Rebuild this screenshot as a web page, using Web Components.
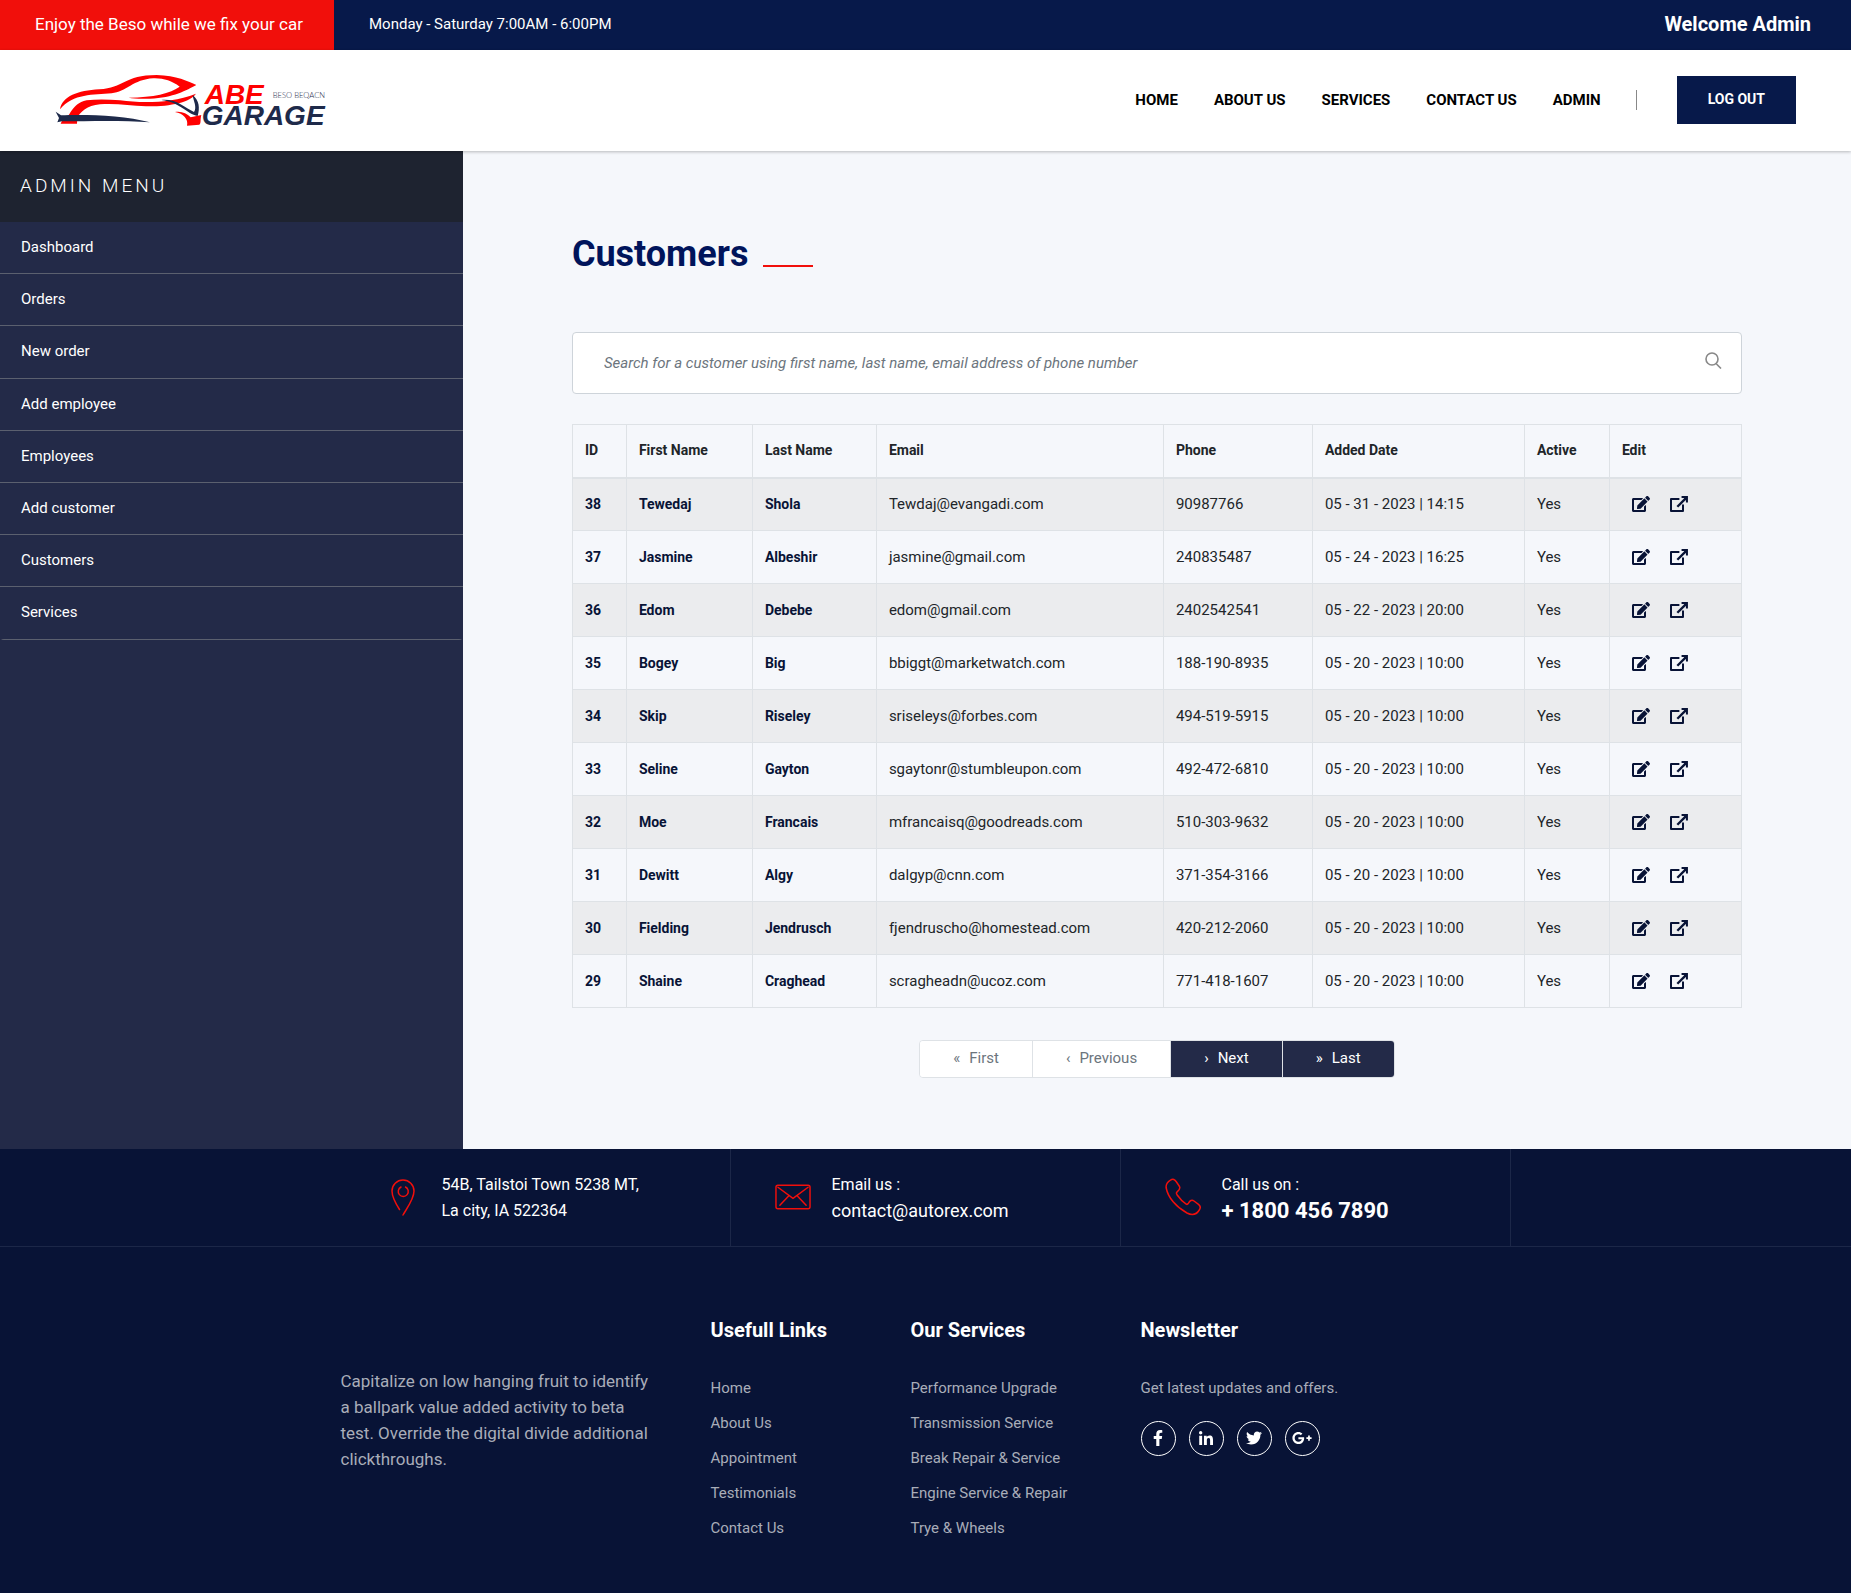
<!DOCTYPE html>
<html lang="en">
<head>
<meta charset="utf-8">
<title>Abe Garage - Customers</title>
<style>
  body { margin: 0; font: 16px/1.7 Roboto, "Liberation Sans", sans-serif; color: #222; background: #081336; }
</style>
</head>
<body>
<garage-app></garage-app>
<script>
const define = (name, css, html, setup) => {
  const tpl = document.createElement('template');
  tpl.innerHTML = `<style>*{box-sizing:border-box}a{color:inherit;text-decoration:none}ul{list-style:none;margin:0;padding:0}svg{display:block}${css}</style>${html}`;
  customElements.define(name, class extends HTMLElement {
    constructor() {
      super();
      this.attachShadow({ mode: 'open' }).append(tpl.content.cloneNode(true));
    }
    connectedCallback() { if (setup) setup(this.shadowRoot, this); }
  });
};

define('top-bar', `
  :host { display: flex; align-items: center; height: 50px; background: #07194a; color: #fff; padding-right: 40px; }
  .promo { align-self: stretch; display: flex; align-items: center; padding: 0 31px 2px 35px; background: #f10f0b; font-size: 17px; line-height: 26px; }
  .hours { flex: 1; padding: 0 35px 2px; font-size: 15px; line-height: 26px; }
  .user { font-size: 20px; font-weight: 700; line-height: 26px; padding-bottom: 2px; }
`, `<div class="promo">Enjoy the Beso while we fix your car</div>
  <div class="hours">Monday - Saturday 7:00AM - 6:00PM</div>
  <div class="user">Welcome Admin</div>`);

define('garage-logo', `:host { display: block; } text { font-family: "Liberation Sans", sans-serif; font-weight: bold; font-style: italic; font-size: 84px; }
  .sub { font-family: Lato, sans-serif; font-weight: 300; font-style: normal; font-size: 23px; }`, `
  <svg width="271" height="64" viewBox="45 22 813 192" role="img" aria-label="Abe Garage">
    <path fill="#f00" d="M60 146C68 106 112 90 178 86C252 82 252 43 350 43C410 45 445 62 469 73C440 88 400 112 330 114C300 115 280 114 266 111C340 110 392 98 419 78C395 60 370 52 340 53C280 56 258 94 215 98C160 103 100 98 60 146Z"/>
    <path fill="#f00" d="M62 189L66 180C95 170 90 130 140 119C170 115 205 116 240 119C310 128 390 128 468 99C450 125 390 138 318 137C270 136 230 127 180 131C140 134 122 155 112 170L111 189Z"/>
    <path fill="#1e2a4a" d="M47 153L63 164C130 161 250 163 330 185C250 179 150 182 66 182L52 185L57 172Z"/>
    <path fill="#1e2a4a" d="M364 118C410 114 435 142 462 154C472 140 460 120 458 103C478 120 480 142 473 166C440 160 420 124 364 118Z"/>
    <path fill="#f00" d="M405 154C425 151 440 158 452 170L484 163C480 176 484 188 478 192L441 195C446 176 430 158 405 154Z"/>
    <text x="494" y="129" fill="#f00">ABE</text>
    <text x="485" y="193" fill="#1e2a4a">GARAGE</text>
    <text class="sub" x="698" y="113" fill="#1e2a4a">BESO BEQACN</text>
  </svg>`);

define('site-header', `
  :host { display: flex; align-items: center; height: 101px; padding: 0 55px 1px; box-sizing: border-box; background: #fff; box-shadow: 0 1px 3px rgba(0,0,0,.25); position: relative; z-index: 1; }
  nav { flex: 1; display: flex; justify-content: flex-end; gap: 36px; font-size: 15px; font-weight: 700; line-height: 30px; color: #000; text-transform: uppercase; }
  .rule { width: 1px; height: 20px; margin: 0 40px 0 35px; background: #888; }
  button { border: 0; height: 48px; padding: 0 31px 2px; background: #07194a; color: #fff; font: 700 14px/20px Roboto, sans-serif; }
`, `<garage-logo></garage-logo>
  <nav><a href="#">Home</a><a href="#">About Us</a><a href="#">Services</a><a href="#">Contact Us</a><a href="#">Admin</a></nav>
  <div class="rule"></div>
  <button type="button">LOG OUT</button>`);

define('admin-sidebar', `
  :host { display: block; background: #232a48; color: #fff; }
  h2 { margin: 0; height: 71px; padding: 22px 20px; background: #1e2330; font-size: 19px; font-weight: 300; line-height: 26px; letter-spacing: 3px; }
  ul { border-radius: 4px; overflow: hidden; }
  li { border-bottom: 1px solid #5b606f; padding: 11px 21px 13px; font-size: 16px; line-height: 1.7; }
  a { font-size: 15px; line-height: 20px; }
`, `<h2>ADMIN MENU</h2><ul></ul>`, root => {
  root.querySelector('ul').innerHTML = ['Dashboard', 'Orders', 'New order', 'Add employee', 'Employees', 'Add customer', 'Customers', 'Services']
    .map(t => `<li><a href="#">${t}</a></li>`).join('');
});

define('page-title', `
  :host { display: flex; align-items: flex-end; gap: 15px; }
  h1 { margin: 0; font-size: 36px; font-weight: 700; line-height: 46px; color: #00145b; }
  i { width: 50px; height: 2px; margin-bottom: 10px; background: #f10f0b; }
`, `<h1><slot></slot></h1><i></i>`);

define('search-box', `
  :host { display: block; }
  label { display: flex; align-items: center; height: 62px; padding: 0 19px 0 31px; background: #fff; border: 1px solid #ced4da; border-radius: 4px; }
  input { flex: 1; min-width: 0; height: 60px; border: 0; padding: 0; background: none; outline: 0; font: italic 15px/24px Roboto, sans-serif; color: #222; }
  input::placeholder { color: #6c757d; opacity: 1; }
  svg { margin-bottom: 6px; }
`, `<label><input type="text" aria-label="Search customers" placeholder="Search for a customer using first name, last name, email address of phone number">
  <svg width="17" height="17" viewBox="0 0 17 17" fill="none" stroke="#888" stroke-width="1.6"><circle cx="7" cy="7" r="6"/><path d="M11 11.5L16 16.5"/></svg></label>`);

const customers = `38|Tewedaj|Shola|Tewdaj@evangadi.com|90987766|05 - 31 - 2023 | 14:15
37|Jasmine|Albeshir|jasmine@gmail.com|240835487|05 - 24 - 2023 | 16:25
36|Edom|Debebe|edom@gmail.com|2402542541|05 - 22 - 2023 | 20:00
35|Bogey|Big|bbiggt@marketwatch.com|188-190-8935|05 - 20 - 2023 | 10:00
34|Skip|Riseley|sriseleys@forbes.com|494-519-5915|05 - 20 - 2023 | 10:00
33|Seline|Gayton|sgaytonr@stumbleupon.com|492-472-6810|05 - 20 - 2023 | 10:00
32|Moe|Francais|mfrancaisq@goodreads.com|510-303-9632|05 - 20 - 2023 | 10:00
31|Dewitt|Algy|dalgyp@cnn.com|371-354-3166|05 - 20 - 2023 | 10:00
30|Fielding|Jendrusch|fjendruscho@homestead.com|420-212-2060|05 - 20 - 2023 | 10:00
29|Shaine|Craghead|scragheadn@ucoz.com|771-418-1607|05 - 20 - 2023 | 10:00`.split('\n').map(l => l.split(/\|(?! )/));

define('customer-table', `
  :host { display: block; }
  table { width: 100%; table-layout: fixed; border-collapse: collapse; font-size: 14px; line-height: 27px; color: #212529; }
  th, td { border: 1px solid #dee2e6; padding: 0 12px; text-align: left; }
  td { font-size: 15px; }
  thead tr { height: 53px; }
  thead th { font-weight: 700; border-bottom-width: 2px; }
  tbody tr { height: 53px; }
  tbody tr:nth-child(odd) { background: #ebecee; }
  tbody th { font-weight: 700; color: #081336; }
  .act { display: flex; gap: 20px; padding-left: 10px; color: #081336; }
`, `<table>
  <colgroup><col style="width:54px"><col style="width:126px"><col style="width:124px"><col><col style="width:149px"><col style="width:212px"><col style="width:85px"><col style="width:132px"></colgroup>
  <thead><tr><th>ID</th><th>First Name</th><th>Last Name</th><th>Email</th><th>Phone</th><th>Added Date</th><th>Active</th><th>Edit</th></tr></thead>
  <tbody></tbody></table>`, root => {
  root.querySelector('tbody').innerHTML = customers.map(c => `<tr><th>${c[0]}</th><th>${c[1]}</th><th>${c[2]}</th><td>${c[3]}</td><td>${c[4]}</td><td>${c[5]}</td><td>Yes</td><td><div class="act">
    <a href="#" aria-label="Edit"><svg width="18" height="16" viewBox="0 0 576 512" fill="currentColor"><path d="M402.6 83.2l90.2 90.2c3.8 3.8 3.8 10 0 13.8L274.4 405.6l-92.8 10.3c-12.4 1.4-22.9-9.1-21.5-21.5l10.3-92.8L388.8 83.2c3.8-3.8 10-3.8 13.8 0zm162-22.9l-48.8-48.8c-15.2-15.2-39.9-15.2-55.2 0l-35.4 35.4c-3.8 3.8-3.8 10 0 13.8l90.2 90.2c3.8 3.8 10 3.8 13.8 0l35.4-35.4c15.2-15.3 15.2-40 0-55.2zM384 346.2V448H64V128h229.8c3.2 0 6.2-1.3 8.5-3.5l40-40c7.6-7.6 2.2-20.5-8.5-20.5H48C21.5 64 0 85.5 0 112v352c0 26.5 21.5 48 48 48h352c26.5 0 48-21.5 48-48V306.2c0-10.7-12.9-16-20.5-8.5l-40 40c-2.2 2.3-3.5 5.3-3.5 8.5z"/></svg></a>
    <a href="#" aria-label="Open"><svg width="18" height="16" viewBox="0 0 576 512" fill="none" stroke="currentColor" stroke-linejoin="round"><path stroke-width="64" d="M300 96H32V480H416V270"/><path stroke-width="76" d="M235 345L520 60"/><path stroke-width="64" stroke-linejoin="miter" d="M370 34H542V206"/><path fill="currentColor" stroke="none" d="M410 34H542V166Z"/></svg></a></div></td></tr>`).join('');
});

define('page-nav', `
  :host { display: flex; justify-content: center; }
  nav { display: flex; border: 1px solid #dee2e6; border-radius: 4px; overflow: hidden; font-size: 15px; line-height: 20px; }
  button { display: flex; gap: 9px; border: 0; border-left: 1px solid #dee2e6; padding: 7px 33px 9px; background: #232a48; color: #fff; font: inherit; }
  button:first-child { border-left: 0; }
  button:disabled { background: #fff; color: #6c757d; }
`, `<nav aria-label="Pages"><button type="button" disabled><span>«</span>First</button><button type="button" disabled><span>‹</span>Previous</button><button type="button"><span>›</span>Next</button><button type="button"><span>»</span>Last</button></nav>`);

define('customers-page', `
  :host { display: flex; justify-content: center; background: #f5f7fb; padding: 80px 15px 71px; }
  main { width: 100%; max-width: 1170px; display: flex; flex-direction: column; }
  search-box { margin: 55px 0 30px; }
  page-nav { margin-top: 32px; }
`, `<main><page-title>Customers</page-title><search-box></search-box><customer-table></customer-table><page-nav></page-nav></main>`);

define('contact-item', `
  :host { flex: 1; display: flex; align-items: center; gap: 21px; padding: 23px 0 22px 44px; border-right: 1px solid #1c2748; color: #fff; }
  .icon { width: 36px; display: flex; justify-content: center; padding-bottom: 2px; }
  .text { font-size: 16px; line-height: 26px; }
`, `<div class="icon"><slot name="icon"></slot></div><div class="text"><slot></slot></div>`);

define('contact-strip', `
  :host { display: flex; justify-content: center; background: #081336; border-bottom: 1px solid #1c2748; }
  .row { width: 100%; max-width: 1170px; display: flex; }
  svg { fill: none; stroke: #f10f0b; stroke-width: 1.5; stroke-linecap: round; stroke-linejoin: round; }
  .mail, .tel { display: block; line-height: 26px; }
  .mail { font-size: 18px; } .tel { font-size: 22px; font-weight: 700; }
`, `<div class="row">
  <contact-item><svg slot="icon" width="24" height="37" viewBox="0 0 24 37"><path d="M8.5 30.5C5 25 1 18 1 12A11 11 0 0 1 23 12C23 20 16 29 12 36"/><path d="M10 8A5 5 0 1 0 14.5 8"/></svg>54B, Tailstoi Town 5238 MT,<br>La city, IA 522364</contact-item>
  <contact-item><svg slot="icon" width="37" height="26" viewBox="0 0 37 26"><rect x="1" y="1" width="35" height="24" rx="2"/><path d="M3 3L18.5 14.5L34 3M14 12L5 21.5M23 12L32 21.5"/></svg>Email us :<a class="mail" href="#">contact@autorex.com</a></contact-item>
  <contact-item><svg slot="icon" width="36" height="38" viewBox="0 0 36 38"><path d="M5.5 2.2C8 .4 9.8 1.6 11.500 4L14.500 8.500C15.800 11 13.800 12.500 11.800 14.200C11 15 11.500 16 12.200 17C15 21 18 24.200 21.200 26.200C22.200 26.700 22.800 26.300 23.500 25.200C25 22.600 26.800 21.400 29 23L33.500 26.400C35.600 28 35.800 29.800 34.300 32C31 37.300 26.500 37.300 22 35C11 29 3 19.500 1.200 10C.6 6.200 2.500 4 5.500 2.200Z"/></svg>Call us on :<a class="tel" href="#">+ 1800 456 7890</a></contact-item>
</div>`);

define('link-list', `
  :host { display: block; }
  h3 { margin: 0 0 34px; font-size: 20px; font-weight: 700; line-height: 24px; color: #fff; }
  ::slotted(*) { display: block; color: #a9adb9; text-decoration: none; font-size: 15px; line-height: 25px; margin-bottom: 10px; }
`, `<h3></h3><slot></slot>`, (root, el) => { root.querySelector('h3').textContent = el.getAttribute('heading'); });

define('social-links', `
  :host { display: flex; gap: 13px; }
  a { width: 35px; height: 35px; border: 1px solid #fff; border-radius: 50%; display: flex; align-items: center; justify-content: center; padding-bottom: 2px; color: #fff; }
  svg { fill: currentColor; }
`, `<a href="#" aria-label="Facebook"><svg width="10" height="16" viewBox="0 0 320 512"><path d="M279.14 288l14.22-92.66h-88.91v-60.13c0-25.35 12.42-50.06 52.24-50.06h40.42V6.26S260.43 0 225.36 0c-73.22 0-121.08 44.38-121.08 124.72v70.62H22.89V288h81.39v224h100.17V288z"/></svg></a>
<a href="#" aria-label="LinkedIn"><svg width="14" height="14" viewBox="0 0 448 448"><path d="M100.28 448H7.4V148.9h92.88zM53.79 108.1C24.09 108.1 0 83.5 0 53.8a53.79 53.79 0 0 1 107.58 0c0 29.7-24.1 54.3-53.79 54.3zM447.9 448h-92.68V302.4c0-34.7-.7-79.2-48.29-79.2-48.29 0-55.69 37.7-55.69 76.7V448h-92.78V148.9h89.08v40.8h1.3c12.4-23.5 42.69-48.3 87.88-48.3 94 0 111.28 61.9 111.28 142.3V448z"/></svg></a>
<a href="#" aria-label="Twitter"><svg width="16" height="16" viewBox="0 0 512 512"><path d="M459.37 151.716c.325 4.548.325 9.097.325 13.645 0 138.72-105.583 298.558-298.558 298.558-59.452 0-114.68-17.219-161.137-47.106 8.447.974 16.568 1.299 25.34 1.299 49.055 0 94.213-16.568 130.274-44.832-46.132-.975-84.792-31.188-98.112-72.772 6.498.974 12.995 1.624 19.818 1.624 9.421 0 18.843-1.3 27.614-3.573-48.081-9.747-84.143-51.98-84.143-102.985v-1.299c13.969 7.797 30.214 12.67 47.431 13.319-28.264-18.843-46.781-51.005-46.781-87.391 0-19.492 5.197-37.36 14.294-52.954 51.655 63.675 129.3 105.258 216.365 109.807-1.624-7.797-2.599-15.918-2.599-24.04 0-57.828 46.782-104.934 104.934-104.934 30.213 0 57.502 12.67 76.67 33.137 23.715-4.548 46.456-13.32 66.599-25.34-7.798 24.366-24.366 44.833-46.132 57.827 21.117-2.273 41.584-8.122 60.426-16.243-14.292 20.791-32.161 39.308-52.628 54.253z"/></svg></a>
<a href="#" aria-label="Google Plus"><svg width="20" height="16" viewBox="0 0 640 512"><path d="M386.061 228.496c1.834 9.692 3.143 19.384 3.143 31.956C389.204 370.205 315.599 448 204.8 448c-106.084 0-192-85.915-192-192s85.916-192 192-192c51.864 0 95.083 18.859 128.611 50.292l-52.126 50.03c-14.145-13.621-39.028-29.599-76.485-29.599-65.484 0-118.92 54.221-118.92 121.277 0 67.056 53.436 121.277 118.92 121.277 75.961 0 104.513-54.745 108.965-82.773H204.8v-66.009h181.261zm185.406 6.437V179.2h-56.001v55.733h-55.733v56.001h55.733v55.733h56.001v-55.733H627.2v-56.001h-55.733z"/></svg></a>`);

define('site-footer', `
  :host { display: flex; justify-content: center; background: #081336; padding: 71px 0 47px; color: #a9adb9; }
  .row { width: 100%; max-width: 1170px; display: grid; grid-template-columns: 310px 140px 170px 1fr; column-gap: 60px; }
  .about { margin: 50px 0 0; font-size: 17px; line-height: 26px; }
  social-links { margin-top: 20px; }
`, `<div class="row">
  <p class="about">Capitalize on low hanging fruit to identify a ballpark value added activity to beta test. Override the digital divide additional clickthroughs.</p>
  <link-list heading="Usefull Links"><a href="#">Home</a><a href="#">About Us</a><a href="#">Appointment</a><a href="#">Testimonials</a><a href="#">Contact Us</a></link-list>
  <link-list heading="Our Services"><a href="#">Performance Upgrade</a><a href="#">Transmission Service</a><a href="#">Break Repair &amp; Service</a><a href="#">Engine Service &amp; Repair</a><a href="#">Trye &amp; Wheels</a></link-list>
  <div><link-list heading="Newsletter"><span>Get latest updates and offers.</span></link-list><social-links></social-links></div>
</div>`);

define('garage-app', `
  :host { display: block; }
  .body { display: grid; grid-template-columns: 1fr 3fr; }
`, `<top-bar></top-bar><site-header></site-header>
  <div class="body"><admin-sidebar></admin-sidebar><customers-page></customers-page></div>
  <contact-strip></contact-strip><site-footer></site-footer>`);
</script>
</body>
</html>
